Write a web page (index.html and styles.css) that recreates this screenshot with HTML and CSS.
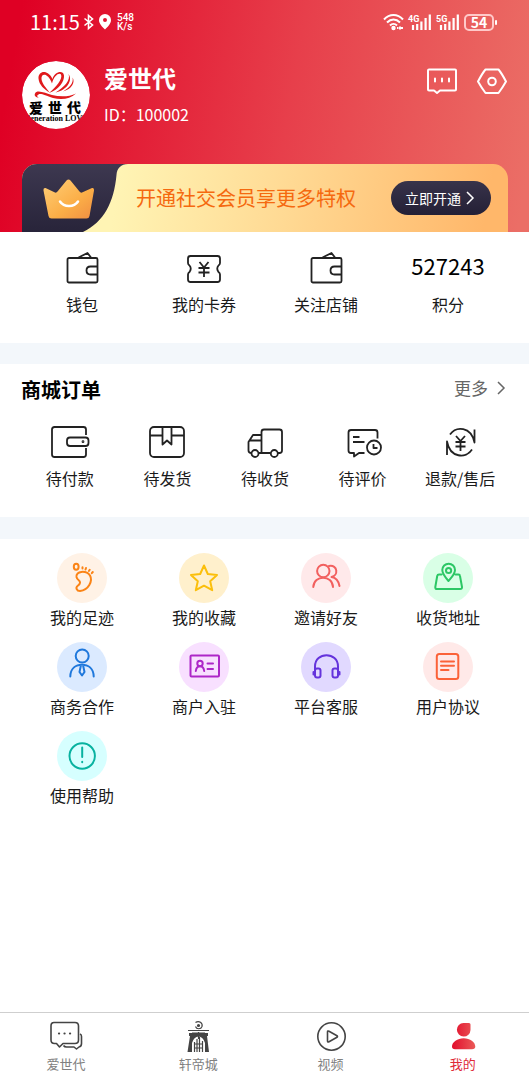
FILE: index.html
```html
<!DOCTYPE html>
<html lang="zh-CN">
<head>
  <meta charset="UTF-8">
  <meta name="viewport" content="width=device-width, initial-scale=1.0">
  <title>我的</title>
  <link rel="stylesheet" href="styles.css">
</head>
<body>
  <header class="top">
    <div class="status">
      <div class="status-left">
        <span class="clock">11:15</span>
        <svg width="12" height="18" viewBox="0 0 12 18" fill="none" stroke="#fff" stroke-width="1.6"><path d="M1.500 5.500 9.500 12 5.500 15.500V2.500L9.500 6 1.500 12.500"/></svg>
        <svg width="14" height="18" viewBox="0 0 14 18"><path fill="#fff" fill-rule="evenodd" d="M7 1a6 6 0 0 1 6 6c0 4-3.500 7-6 9.500C4.500 14 1 11 1 7a6 6 0 0 1 6-6zm0 4a2 2 0 1 0 0 4 2 2 0 0 0 0-4z"/></svg>
        <span class="speed"><span>548</span><span>K/s</span></span>
      </div>
      <div class="status-right">
        <svg width="21" height="18" viewBox="0 0 21 18" fill="none" stroke="#fff" stroke-width="2"><path d="M1 6.500c5.500-6 13.500-6 19 0M4 9.500c4-4 9-4 13 0M7 12.500c2-2 5-2 7 0"/><circle cx="10.500" cy="15" r="1.200" fill="#fff"/><path d="M14 15h1.500M17 13.500v3M18 15h2"/></svg>
        <svg class="signal" width="24" height="18" viewBox="0 0 24 18"><text x="0" y="9">4G</text><path d="M5 12V17M9.200 11V17M13.400 8.500V17M17.600 5V17M21.800 1.500V17"/></svg>
        <svg class="signal" width="24" height="18" viewBox="0 0 24 18"><text x="0" y="9">5G</text><path d="M5 12V17M9.200 11V17M13.400 8.500V17M17.600 5V17M21.800 1.500V17"/></svg>
        <span class="battery">54</span>
      </div>
    </div>

    <div class="profile">
      <svg class="avatar" width="68" height="68" viewBox="0 0 68 68" role="img" aria-label="头像">
        <circle cx="34" cy="34" r="34" fill="#fff"/>
        <g fill="#e01a1c">
          <path d="M30.500 18C26 8 16 9.500 16.500 17.500 17 24 22 28 27.500 31.500 24.500 27 20 23 19.500 18 19 12 26 11.500 30 22.500 32 14 37.500 11 39 13.500 41 18 34 26 27 32 37 29 42.500 20 42 14.500 41 8.500 32.500 11 30.500 18z"/>
          <path d="M46.500 13C49 19 42 26.500 33.500 31.500 45.500 29 51 19 46.500 13z"/>
          <path d="M50.500 16.500C52 22 47 27 41 30.500 50 28 53.500 21 50.500 16.500z"/>
          <path d="M13 32.500C15 28 24 32.500 30 34 38 36 47 36 54 32.500 48 38 40 39 31 37 23 34.500 19 32 16.500 33.500 14.500 34.500 15 36 17 36.500 13.500 36.500 12 34.500 13 32.500z"/>
        </g>
        <text class="avatar-name" x="7 26 45" y="52">爱世代</text>
        <text class="avatar-sub" x="34" y="60">Generation LOVE</text>
      </svg>
      <div class="who">
        <h1>爱世代</h1>
        <p>ID：100002</p>
      </div>
      <div class="actions">
        <button type="button" aria-label="消息">
          <svg width="32" height="30" viewBox="0 0 32 30"><path d="M3 3.500h26q1 0 1 1v19q0 1-1 1H14L11 27 8 24.500H3q-1 0-1-1v-19q0-1 1-1z"/><path d="M9 12.500v3M16 12.500v3M23 12.500v3"/></svg>
        </button>
        <button type="button" aria-label="设置">
          <svg width="32" height="30" viewBox="0 0 32 30"><path d="M9.500 3.500h13Q25.500 7 30 15.500 26 22.500 22.500 27h-13Q6 22.500 2 15.500 6.500 7 9.500 3.500z"/><circle cx="16" cy="15.500" r="3.800"/></svg>
        </button>
      </div>
    </div>

    <section class="vip">
      <svg width="106" height="68" viewBox="0 0 106 68">
        <defs>
          <linearGradient id="dark" x1="0" y1="0" x2="0" y2="1"><stop offset="0" stop-color="#3d3850"/><stop offset="1" stop-color="#28243a"/></linearGradient>
          <linearGradient id="gold" x1="0" y1="0" x2="1" y2="1"><stop offset="0" stop-color="#ffcf78"/><stop offset=".6" stop-color="#fbae47"/><stop offset="1" stop-color="#f08e42"/></linearGradient>
        </defs>
        <path fill="url(#dark)" d="M0 0h106c-7 0-11 4-11.500 11C92 38 82 58 61 68H0z"/>
        <path fill="url(#gold)" d="M23.500 24 33 28.500Q34.500 29 35.500 27.500L44.500 16.500Q46.500 14.500 48.500 16.500L57.500 27.500Q58.500 29 60 28.500L70 24Q72.500 23.500 72 26.500L67.500 52Q67 54.500 64.500 54.500H29.500Q27 54.500 26.500 52L21.500 26.500Q21 23.500 23.500 24z"/>
        <path d="M38 37.500c4 6 14 6 18 0" fill="none" stroke="#fff" stroke-width="2.500" stroke-linecap="round"/>
      </svg>
      <p>开通社交会员享更多特权</p>
      <button type="button">立即开通<svg width="10" height="14" viewBox="0 0 10 14"><path d="M2 1l6 6-6 6"/></svg></button>
    </section>
  </header>

  <main>
    <nav class="grid stats">
      <a href="#">
        <svg class="icon" width="34" height="34" viewBox="0 0 34 34"><rect x="2.500" y="7" width="30" height="24.500" rx="1.500"/><path d="M13.500 6.500 22.500 2 26 6.500M32.500 15.500H25.500q-4 0-4 4t4 4H32.500"/></svg>
        <span>钱包</span>
      </a>
      <a href="#">
        <svg class="icon" width="34" height="34" viewBox="0 0 34 34"><path d="M3.500 5H30.500Q33 5 33 7.500V12Q33 13.500 31.500 14.500 29 17.500 31.500 21 33 22 33 23.500V28.500Q33 31 30.500 31H3.500Q1 31 1 28.500V23.500Q1 22 2.500 21 5 17.500 2.500 14.500 1 13.500 1 12V7.500Q1 5 3.500 5z"/><path d="M12.500 11 17 16.500 21.500 11M11.500 17H22.500M11.500 21.500H22.500M17 16.500V26"/></svg>
        <span>我的卡券</span>
      </a>
      <a href="#">
        <svg class="icon" width="34" height="34" viewBox="0 0 34 34"><rect x="2.500" y="7" width="30" height="24.500" rx="1.500"/><path d="M13.500 6.500 22.500 2 26 6.500M32.500 15.500H25.500q-4 0-4 4t4 4H32.500"/></svg>
        <span>关注店铺</span>
      </a>
      <a href="#">
        <strong>527243</strong>
        <span>积分</span>
      </a>
    </nav>

    <section class="orders">
      <div class="orders-head">
        <h2>商城订单</h2>
        <a href="#">更多<svg width="10" height="16" viewBox="0 0 10 16"><path d="M2 2l6 6-6 6"/></svg></a>
      </div>
      <nav class="grid order-list">
        <a href="#">
          <svg class="icon" width="40" height="40" viewBox="0 0 40 40"><path d="M36 13V7.500Q36 5 33.500 5H4.500Q2 5 2 7.500v25Q2 35 4.500 35h29Q36 35 36 32.500V26"/><rect x="17" y="15.500" width="21.500" height="8.500" rx="3"/><circle cx="33" cy="19.700" r=".5"/></svg>
          <span>待付款</span>
        </a>
        <a href="#">
          <svg class="icon" width="40" height="40" viewBox="0 0 40 40"><rect x="3" y="5" width="34" height="30" rx="4"/><path d="M3 13.500H15.500M24.500 13.500H37M15.500 5V22.500L20 18.500 24.500 22.500V5"/></svg>
          <span>待发货</span>
        </a>
        <a href="#">
          <svg class="icon" width="40" height="40" viewBox="0 0 40 40"><path d="M16.500 31V10Q16.500 7.500 19 7.500H34.500Q37 7.500 37 10V28.500Q37 31 34.500 31H33M25.500 31H14M6.500 31Q3.500 31 3.500 28.500V20L8 13H16.500M5 18.500H16.500"/><circle cx="10" cy="31.500" r="3.500"/><circle cx="29.300" cy="31.500" r="3.500"/></svg>
          <span>待收货</span>
        </a>
        <a href="#">
          <svg class="icon" width="40" height="40" viewBox="0 0 40 40"><path d="M34.500 16.500V10.500Q34.500 8 32 8H8Q5.500 8 5.500 10.500V28.500Q5.500 31 8 31H11V34.500L16 31H21.500M10 15H16.500M10 20H21.500"/><circle cx="31" cy="25.500" r="7"/><path d="M30.500 22V26H34.500"/></svg>
          <span>待评价</span>
        </a>
        <a href="#">
          <svg class="icon" width="40" height="40" viewBox="0 0 40 40"><path d="M10 12.500C16 4 31 4 34.500 20.500V7.500M32 27.500C26 37 10 36 7 19.500V33M16 14 20.500 19 25 14M15.500 20H25.500M15.500 24.500H25.500M20.500 19V29"/></svg>
          <span>退款/售后</span>
        </a>
      </nav>
    </section>

    <nav class="grid services">
      <a href="#">
        <svg class="badge orange" width="50" height="50" viewBox="0 0 50 50"><ellipse cx="19.200" cy="13.700" rx="2.400" ry="3"/><path d="M25.500 14.300v1.200M29 15l-.5 1.500M32.700 16.800l-.8 1.200M35.800 19l-1 1.200M19.500 24C18.500 18 29 17 33 22.500 36 28 31.500 37 23 38 19.500 38 18.500 34.500 20.500 33 24 30.500 23.500 28.500 21.500 27Q20 26 19.500 24z"/></svg>
        <span>我的足迹</span>
      </a>
      <a href="#">
        <svg class="badge yellow" width="50" height="50" viewBox="0 0 50 50"><path d="M25 12.500 28.800 21 38 22 31.200 28.200 33.200 37.200 25 32.700 16.800 37.200 18.800 28.200 12 22 21.200 21z"/></svg>
        <span>我的收藏</span>
      </a>
      <a href="#">
        <svg class="badge red" width="50" height="50" viewBox="0 0 50 50"><circle cx="22.300" cy="18" r="6.200"/><path d="M12.300 34C12.800 21.500 31.500 21.500 32 34M28 13C37 11.500 37.500 22.500 30.500 24Q37 25 38.500 33"/></svg>
        <span>邀请好友</span>
      </a>
      <a href="#">
        <svg class="badge green" width="50" height="50" viewBox="0 0 50 50"><path d="M25.500 28C22 24 19.300 21 19.300 17A6.300 6.300 0 0 1 32 17C32 21 29 24 25.500 28zM18.500 21.500H16Q14.500 21.500 14.200 23L12.300 34Q12 36 14 36H37Q39.300 36 39 34L37 23Q36.800 21.500 35.500 21.500H32.500"/><circle cx="25.600" cy="17.500" r="2.600"/></svg>
        <span>收货地址</span>
      </a>
      <a href="#">
        <svg class="badge blue" width="50" height="50" viewBox="0 0 50 50"><circle cx="25.200" cy="14" r="6.500"/><path d="M13.300 34.500C13.500 26 19 22.700 25 22.700S36.500 26 36.700 34.500M24 23 22.500 30 25 33.500 27.500 30 26 23"/></svg>
        <span>商务合作</span>
      </a>
      <a href="#">
        <svg class="badge purple" width="50" height="50" viewBox="0 0 50 50"><rect x="11.500" y="13.500" width="28.500" height="21" rx="1"/><circle cx="21" cy="21.500" r="2.700"/><path d="M16.800 29C17.500 22.500 24.500 22.500 25.200 29M28.500 21.500h5.500M28.500 27h5.500"/></svg>
        <span>商户入驻</span>
      </a>
      <a href="#">
        <svg class="badge violet" width="50" height="50" viewBox="0 0 50 50"><path d="M14 28V24.500C14 9.500 37 9.500 37 24.500V28"/><rect x="14" y="26.500" width="5.500" height="9" rx="2"/><rect x="31.500" y="26.500" width="5.500" height="9" rx="2"/><path d="M12.500 30v2.500M38.500 30v2.500"/></svg>
        <span>平台客服</span>
      </a>
      <a href="#">
        <svg class="badge coral" width="50" height="50" viewBox="0 0 50 50"><rect x="13.800" y="12" width="21.500" height="25" rx="2.500"/><path d="M18 19.500H31M18 23.700H31M18 28H25.500"/></svg>
        <span>用户协议</span>
      </a>
      <a href="#">
        <svg class="badge teal" width="50" height="50" viewBox="0 0 50 50"><circle cx="25.200" cy="25" r="12.700"/><path d="M25.200 16.500V26M25.200 30.800v.4"/></svg>
        <span>使用帮助</span>
      </a>
    </nav>
  </main>

  <nav class="tabs">
    <a href="#">
      <svg width="36" height="36" viewBox="0 0 36 36"><path d="M6 3.500H27Q30.500 3.500 30.500 7V21Q30.500 24.500 27 24.500H15L11.500 28 8.500 24.500H6.500Q3 24.500 3 21V7Q3 3.500 6 3.500zM32 15Q33.500 15.500 33.500 17.500V24.500Q33.500 27.500 31 28L28.500 30 26 28H18.500Q16.500 28 15.500 26.500"/><path class="dots" d="M11 14.500h.1M16.500 14.500h.1M22 14.500h.1"/></svg>
      <span>爱世代</span>
    </a>
    <a href="#">
      <svg width="36" height="36" viewBox="0 0 36 36"><path stroke-width="1.200" d="M15.500 3.500C19 1 23 4 22 7.500 21 10.500 16.500 10.500 15.500 7.500M8 11.500H29M12 14H25M11 14V18M26 14V18"/><circle cx="18.500" cy="6.500" r=".8"/><path class="solid" fill-rule="evenodd" d="M9 14H28V17H27L29 33H25V24Q23 17.500 18.500 17.500T12 24V33H7.500L10 17H9z"/><path stroke-width="1.200" d="M14.500 33V23M17 33V20M19.500 33V18M22.500 33V22M14 25H23M15 29H23M18.500 13V20"/></svg>
      <span>轩帝城</span>
    </a>
    <a href="#">
      <svg width="36" height="36" viewBox="0 0 36 36"><circle cx="18.500" cy="17.500" r="13.700"/><path d="M14.500 13Q14.500 11.500 16 12.300L24 16.700Q25 17.500 24 18.300L16 22.700Q14.500 23.500 14.500 22z"/></svg>
      <span>视频</span>
    </a>
    <a href="#" class="active" aria-current="page">
      <svg width="36" height="36" viewBox="0 0 36 36">
        <defs><linearGradient id="me"><stop offset="0" stop-color="#e20d2c"/><stop offset="1" stop-color="#ea5a58"/></linearGradient></defs>
        <path fill="url(#me)" stroke="none" d="M18.500 4H24Q25.500 4 25.500 5.500V11a6.800 6.800 0 1 1-7-7zM18.700 19.200C25 19.200 30.300 23 30.300 27.500Q30.300 30.200 27 30.200H10Q7 30.200 7 27.500C7 23 12.500 19.200 18.700 19.200z"/>
      </svg>
      <span>我的</span>
    </a>
  </nav>
</body>
</html>
```
FILE: styles.css
```css
* {
  box-sizing: border-box;
}

body {
  margin: 0;
  min-height: 100vh;
  display: flex;
  flex-direction: column;
  font-family: "Noto Sans CJK SC", sans-serif;
  font-size: 16px;
  line-height: 24px;
  color: #1a1a1a;
  background: #fff;
}

h1, h2, p {
  margin: 0;
}

a {
  color: inherit;
  text-decoration: none;
}

button {
  padding: 0;
  border: none;
  background: none;
  font: inherit;
  color: #fff;
  cursor: pointer;
}

svg {
  display: block;
  flex: none;
}



.top {
  padding: 0 21px 0 22px;
  color: #fff;
  background: linear-gradient(100deg, #df0024 4%, #e73f4b 54%, #eb6e66 98%);
}

.status {
  display: flex;
  justify-content: space-between;
  align-items: center;
  height: 44px;
  padding: 0 14px 0 8px;
}

.status-left,
.status-right {
  display: flex;
  align-items: center;
  gap: 4px;
}

.status-left {
  gap: 3px;
}

.clock {
  font-size: 20px;
}

.speed {
  display: flex;
  flex-direction: column;
  padding-left: 2px;
  font-family: Roboto, sans-serif;
  font-size: 10px;
  font-weight: 500;
  line-height: 9px;
}

.signal {
  overflow: visible;
}

.signal text {
  font-family: Roboto, sans-serif;
  font-size: 9px;
  font-weight: 700;
  fill: #fff;
}

.signal path {
  stroke: #fff;
  stroke-width: 2.2;
}

.battery {
  position: relative;
  width: 30px;
  height: 17px;
  border: 2px solid #ffc9c9;
  border-radius: 5px;
  font-size: 14px;
  font-weight: 700;
  line-height: 13px;
  text-align: center;
}

.battery::after {
  content: "";
  position: absolute;
  right: -5px;
  top: 4px;
  width: 2px;
  height: 5px;
  border-radius: 1px;
  background: #fff;
}



.profile {
  display: flex;
  align-items: center;
  padding: 17px 0 35px;
}

.avatar {
  border-radius: 50%;
}

.avatar-name {
  font-size: 14px;
  font-weight: 900;
}

.avatar-sub {
  font-family: "Liberation Serif", serif;
  font-size: 8px;
  font-weight: 700;
  text-anchor: middle;
}

.who {
  flex: 1;
  padding: 0 0 2px 14px;
}

.who h1 {
  font-size: 24px;
  line-height: 32px;
}

.who p {
  padding-top: 8px;
}

.actions {
  display: flex;
  align-self: flex-start;
  gap: 18px;
  padding-top: 5px;
}

.actions svg {
  fill: none;
  stroke: #fff;
  stroke-width: 2;
  stroke-linecap: round;
  stroke-linejoin: round;
}



.vip {
  display: flex;
  align-items: center;
  border-radius: 15px 15px 0 0;
  overflow: hidden;
  background: linear-gradient(100deg, #fff4b4 20%, #ffd993 55%, #ffb76a 95%);
}

.vip p {
  flex: 1;
  padding-left: 8px;
  font-size: 20px;
  color: #f5690f;
  white-space: nowrap;
}

.vip button {
  display: flex;
  align-items: center;
  gap: 4px;
  height: 34px;
  margin-right: 17px;
  padding: 0 16px 0 14px;
  border-radius: 17px;
  font-size: 14px;
  background: linear-gradient(#38334a, #242036);
}

.vip button path,
.orders-head path {
  fill: none;
  stroke: currentColor;
  stroke-width: 1.5;
}



.grid {
  display: grid;
  grid-template-columns: repeat(4, 1fr);
  padding: 0 20px 0 21px;
}

.grid a {
  display: flex;
  flex-direction: column;
  align-items: center;
  white-space: nowrap;
}

.icon {
  fill: none;
  stroke: #222;
  stroke-width: 1.8;
  stroke-linejoin: round;
}

.stats {
  padding-top: 19px;
  padding-bottom: 27px;
}

.stats a {
  gap: 7px;
}

.stats strong {
  padding-bottom: 6px;
  font-size: 22px;
  font-weight: 400;
  line-height: 28px;
  color: #000;
}



.orders {
  padding: 12px 0 27px;
  border: solid #f3f7fb;
  border-width: 21px 0 22px;
}

.orders-head {
  display: flex;
  justify-content: space-between;
  align-items: flex-start;
  padding: 0 23px 18px 21px;
}

.orders-head h2 {
  font-size: 20px;
  line-height: 28px;
  color: #000;
}

.orders-head a {
  display: flex;
  align-items: center;
  gap: 8px;
  font-size: 17px;
  color: #666;
}

.order-list {
  grid-template-columns: repeat(5, 1fr);
}

.order-list a {
  gap: 4px;
}



.services {
  padding-top: 14px;
  row-gap: 13px;
}

.services a {
  gap: 2px;
}

.badge {
  border-radius: 50%;
  fill: none;
  stroke-width: 2;
  stroke-linecap: round;
  stroke-linejoin: round;
}

.orange { background: #fff2e6; stroke: #fb8416; }
.yellow { background: #fff0cc; stroke: #fbbf0c; }
.red { background: #ffe9ea; stroke: #f2605f; }
.green { background: #d9ffe6; stroke: #2cc765; }
.blue { background: #dbeaff; stroke: #1f78dc; }
.purple { background: #f8e0ff; stroke: #ad27c8; }
.violet { background: #e1d9ff; stroke: #6534dc; }
.coral { background: #ffe9e8; stroke: #fb6238; }
.teal { background: #d6ffff; stroke: #08b2a0; }



.tabs {
  display: flex;
  margin-top: auto;
  padding: 6px 0 7px;
  border-top: 1px solid #cfcfcf;
}

.tabs a {
  flex: 1;
  display: flex;
  flex-direction: column;
  align-items: center;
  font-size: 13px;
  line-height: 18px;
  color: #808080;
}

.tabs svg {
  fill: none;
  stroke: #444;
  stroke-width: 1.6;
  stroke-linejoin: round;
}

.tabs .dots {
  stroke-width: 2.2;
  stroke-linecap: round;
}

.tabs .solid {
  fill: #444;
  stroke: none;
}

.tabs .active {
  color: #e02a38;
}
```
